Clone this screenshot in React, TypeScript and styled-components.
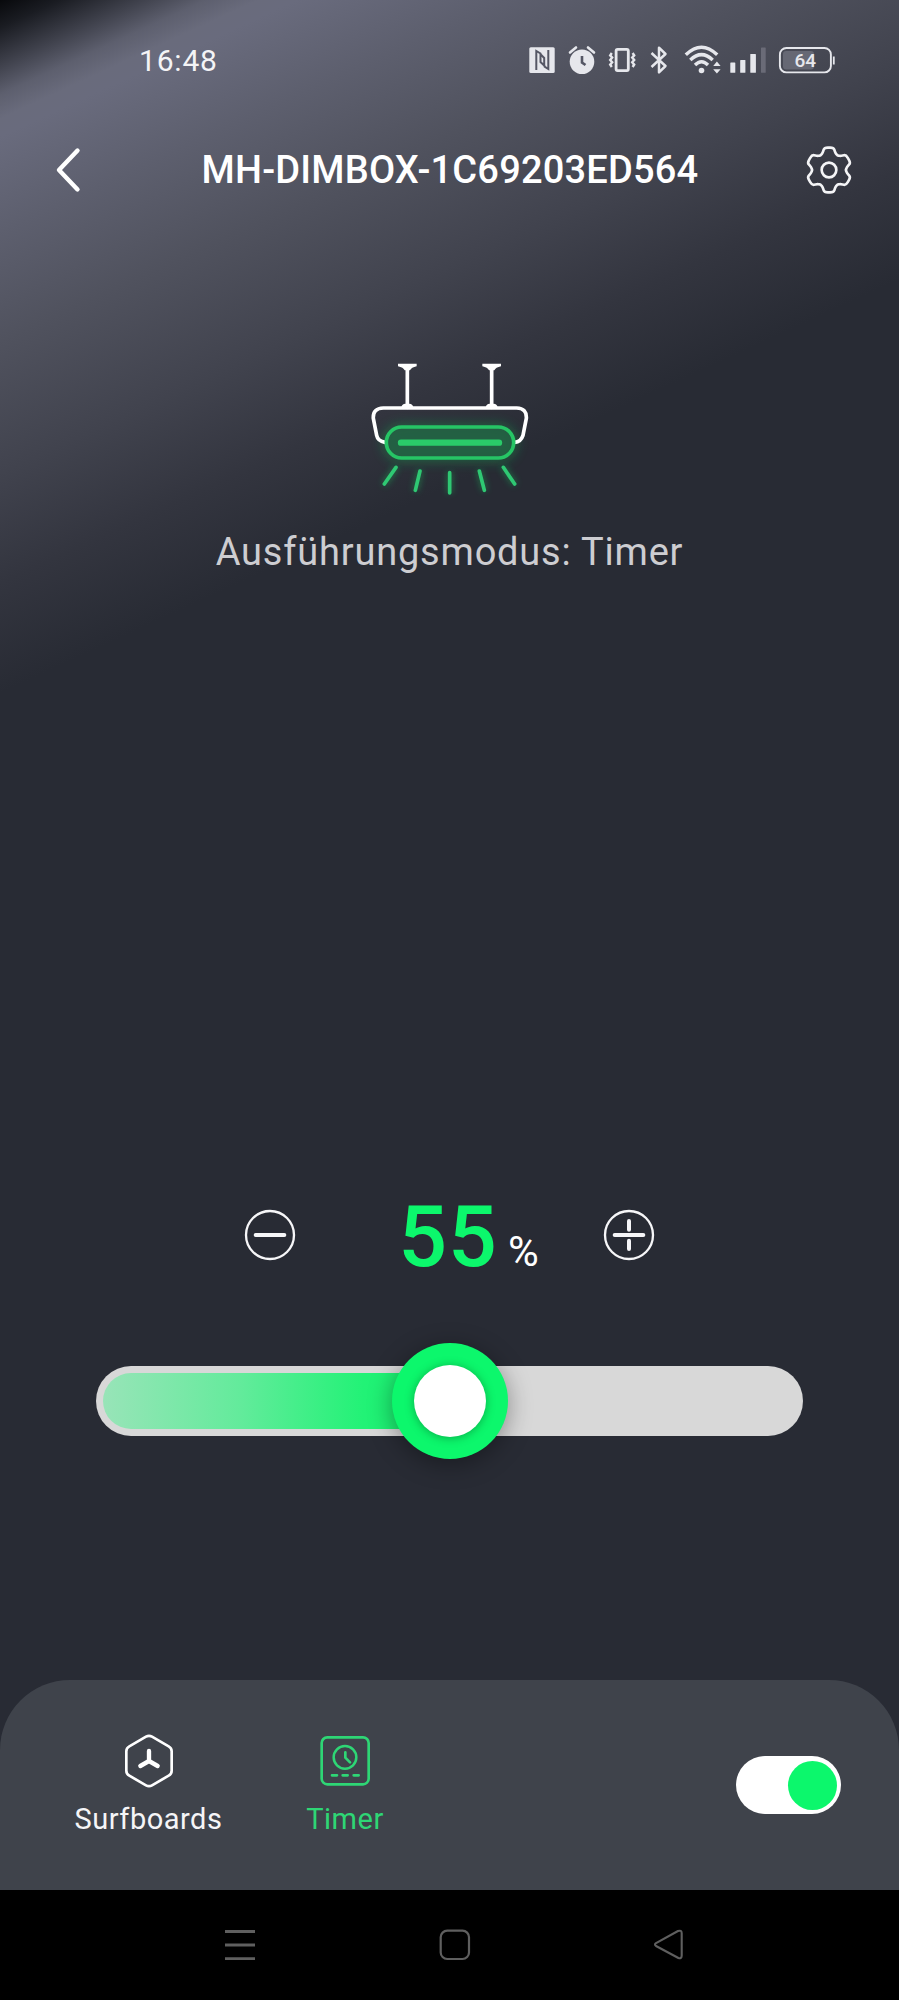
import React from "react";
import styled, { createGlobalStyle } from "styled-components";

const GREEN = "#0cf76c";
const ACTIVE = "#2ed675";
const ICON = "#e6e7ec";

const GlobalStyle = createGlobalStyle`
  *, *::before, *::after { box-sizing: border-box; }
  html, body { margin: 0; padding: 0; background: #282b34; }
  body { font-family: Roboto, "Noto Sans", sans-serif; color: #fff; }
  button { appearance: none; border: 0; padding: 0; background: none; color: inherit; font: inherit; }
  svg { display: block; flex: none; }
`;

const Screen = styled.div`
  width: 899px;
  height: 2000px;
  display: flex;
  flex-direction: column;
  overflow: hidden;
  background: linear-gradient(
    155.3deg,
    #08090c 0px,
    #1a1c22 25px,
    #40424d 60px,
    #5d5f6e 86px,
    #696b7c 108px,
    #696b7d 124px,
    #5d5f6e 210px,
    #50525e 310px,
    #41434e 430px,
    #33353f 530px,
    #282b34 630px
  );
`;

const StatusBar = styled.header`
  height: 120px;
  flex: none;
  display: flex;
  align-items: center;
  justify-content: space-between;
  padding: 0 63px 0 139px;
`;

const Clock = styled.time`
  font-size: 30px;
  line-height: 40px;
  letter-spacing: 0.8px;
  font-weight: 450;
  color: #f4f4f6;
  padding-top: 2px;
`;

const StatusIcons = styled.div`
  display: flex;
  align-items: center;
`;

const StatusSlot = styled.span<{ $gap?: number }>`
  margin-left: ${({ $gap = 12 }) => $gap}px;
`;

const TitleBar = styled.div`
  height: 100px;
  flex: none;
  display: grid;
  grid-template-columns: 96px 1fr 100px;
  align-items: center;
  padding: 0 20px;
`;

const IconButton = styled.button`
  display: flex;
  align-items: center;
  justify-content: center;
`;

const Title = styled.h1`
  margin: 0 0 0 5px;
  text-align: center;
  font-size: 38px;
  line-height: 50px;
  font-weight: 500;
  letter-spacing: 0.2px;
  white-space: nowrap;
`;

const Hero = styled.section`
  flex: none;
  height: 960px;
  padding-top: 130px;
  display: flex;
  flex-direction: column;
  align-items: center;
`;

const ModeLabel = styled.p`
  margin: 18px 0 0;
  font-size: 38px;
  line-height: 48px;
  letter-spacing: 0.8px;
  color: #cdcdd1;
`;

const Stepper = styled.section`
  flex: none;
  height: 110px;
  display: flex;
  align-items: center;
  justify-content: space-between;
  padding: 0 244px;
`;

const Reading = styled.div`
  display: flex;
  align-items: baseline;
  padding: 2px 0 0 38px;
`;

const Value = styled.span`
  font-size: 86px;
  line-height: 107px;
  font-weight: 500;
  letter-spacing: 1px;
  color: ${GREEN};
`;

const Unit = styled.span`
  font-size: 42px;
  margin-left: 10px;
`;

const SliderArea = styled.section`
  flex: none;
  height: 390px;
  padding: 76px 96px 0;
`;

const Track = styled.div`
  height: 70px;
  padding: 7px;
  display: flex;
  align-items: center;
  border-radius: 35px;
  background: #d8d8d8;
`;

const Fill = styled.div`
  width: 347px;
  height: 56px;
  border-radius: 28px 0 0 28px;
  background: linear-gradient(90deg, #98e4b8 0%, #62eb9b 40%, #22f276 75%, #14f26e 100%);
`;

const Thumb = styled.div`
  width: 116px;
  height: 116px;
  flex: none;
  margin-left: -58px;
  display: flex;
  align-items: center;
  justify-content: center;
  border-radius: 50%;
  background: ${GREEN};
  box-shadow: 0 5px 24px rgba(0, 0, 0, 0.36);
`;

const ThumbCore = styled.div`
  width: 72px;
  height: 72px;
  border-radius: 50%;
  background: #fff;
  box-shadow: 0 1px 10px rgba(0, 70, 25, 0.42);
`;

const BottomPanel = styled.footer`
  flex: none;
  height: 210px;
  display: flex;
  align-items: flex-start;
  padding: 51px 58px 0 55px;
  border-radius: 70px 70px 0 0;
  background: #3f434b;
`;

const Tab = styled.button<{ $active?: boolean }>`
  width: ${({ $active }) => ($active ? 206 : 187)}px;
  display: flex;
  flex-direction: column;
  align-items: center;
  gap: 10px;
  font-size: 29px;
  line-height: 36px;
  letter-spacing: 0.5px;
  color: ${({ $active }) => ($active ? ACTIVE : "#f5f5f7")};
`;

const Switch = styled.button`
  width: 105px;
  height: 58px;
  margin: 25px 0 0 auto;
  padding: 0 4px;
  display: flex;
  align-items: center;
  justify-content: flex-end;
  border-radius: 29px;
  background: #fff;
`;

const SwitchKnob = styled.span`
  width: 49px;
  height: 49px;
  border-radius: 50%;
  background: ${GREEN};
`;

const NavBar = styled.nav`
  flex: none;
  height: 110px;
  display: flex;
  align-items: center;
  justify-content: space-between;
  padding: 0 214px 0 224px;
  background: #000;
`;

/* Gear outline: one tooth profile repeated six times, with softened corners. */
const gearPath = (() => {
  const tooth: [number, number][] = [
    [-25, -44],
    [-19, -51],
    [-14, -67],
    [14, -67],
    [19, -51],
    [25, -44],
  ];
  const pts: [number, number][] = [];
  for (let i = 0; i < 6; i++) {
    const a = (i * Math.PI) / 3;
    for (const [x, y] of tooth) {
      pts.push([x * Math.cos(a) - y * Math.sin(a), x * Math.sin(a) + y * Math.cos(a)]);
    }
  }
  const mid = (p: number[], q: number[], t: number) => [p[0] + (q[0] - p[0]) * t, p[1] + (q[1] - p[1]) * t];
  return (
    pts
      .map((p, i) => {
        const before = mid(p, pts[(i + pts.length - 1) % pts.length], 0.38);
        const after = mid(p, pts[(i + 1) % pts.length], 0.38);
        return `${i ? "L" : "M"}${before[0].toFixed(1)} ${before[1].toFixed(1)}Q${p[0].toFixed(1)} ${p[1].toFixed(1)} ${after[0].toFixed(1)} ${after[1].toFixed(1)}`;
      })
      .join("") + "Z"
  );
})();

const NfcIcon = () => (
  <svg width="28" height="30" viewBox="0 0 28 30">
    <rect x="1.3" y="2.3" width="25.4" height="25.6" rx="1.5" fill={ICON} />
    <path d="M8.3 25V6L12.5 8.5L12.5 11M12.5 9V17L17 21.3M20.3 5V24L16.2 21.3M16.2 21.5V13L12 8.8" fill="none" stroke="#555765" strokeWidth="2" />
  </svg>
);

const AlarmIcon = () => (
  <svg width="28" height="30" viewBox="0 0 28 30">
    <circle cx="14" cy="16.8" r="12.3" fill={ICON} />
    <path d="M2 7.5L8 2.5M20 2.5L26 7.5" stroke={ICON} strokeWidth="2.6" strokeLinecap="round" />
    <path d="M14 11V17.5L17.5 20" fill="none" stroke="#555765" strokeWidth="2.6" />
  </svg>
);

const VibrateIcon = () => (
  <svg width="28" height="30" viewBox="0 0 28 30" fill="none" stroke={ICON}>
    <rect x="8.1" y="4.4" width="12.2" height="21.2" rx="1.5" strokeWidth="2.8" />
    <path d="M3.8 8L2.2 10.3L4.2 12.6L2.2 15L4.2 17.3L2.2 19.6L3.8 22M24.6 8L26.2 10.3L24.2 12.6L26.2 15L24.2 17.3L26.2 19.6L24.6 22" strokeWidth="2.4" />
  </svg>
);

const BluetoothIcon = () => (
  <svg width="20" height="30" viewBox="0 0 20 30">
    <path d="M2.5 8L16.5 21L10 27.3V2.7L16.5 9L2.5 22" fill="none" stroke={ICON} strokeWidth="2.5" strokeLinejoin="round" />
  </svg>
);

const WifiIcon = () => (
  <svg width="38" height="30" viewBox="0 0 38 30" fill="none" stroke={ICON}>
    <path d="M1.8 9.8Q17.5 -5.4 33.2 9.8" strokeWidth="3.4" />
    <path d="M6.3 15Q17.5 4.2 28.7 15" strokeWidth="3.4" />
    <path d="M11 20Q17.5 13.6 24 20" strokeWidth="3.4" />
    <circle cx="17.5" cy="25.5" r="2.8" fill={ICON} stroke="none" />
    <path d="M29.2 21L32.9 16.5L36.6 21ZM29.2 24.2L32.9 28.6L36.6 24.2Z" fill={ICON} stroke="none" />
  </svg>
);

const SignalIcon = () => (
  <svg width="38" height="30" viewBox="0 0 38 30" fill={ICON}>
    <rect x="1.3" y="17.5" width="5" height="10.3" rx="0.6" />
    <rect x="11.2" y="15" width="5.2" height="12.8" rx="0.6" />
    <rect x="21.3" y="9" width="5.6" height="18.8" rx="0.6" />
    <rect x="32" y="2.5" width="4.7" height="25.3" rx="0.6" fill="#6a6b77" />
  </svg>
);

const BatteryIcon = () => (
  <svg width="58" height="30" viewBox="0 0 58 30">
    <rect x="5" y="6" width="31" height="18.5" rx="3" fill="#666874" />
    <rect x="1.9" y="3" width="51" height="24.4" rx="6.5" fill="none" stroke={ICON} strokeWidth="1.9" />
    <path d="M55.8 11.5V19.5" stroke={ICON} strokeWidth="1.8" />
    <text x="27.3" y="22" textAnchor="middle" fontFamily="Roboto, sans-serif" fontSize="19" fontWeight="500" fill={ICON}>
      64
    </text>
  </svg>
);

const BackIcon = () => (
  <svg width="28" height="48" viewBox="0 0 28 48">
    <path d="M23.5 4.5L5 24L23.5 43.5" fill="none" stroke="#fff" strokeWidth="4.4" strokeLinecap="round" strokeLinejoin="round" />
  </svg>
);

const GearIcon = () => (
  <svg width="50" height="50" viewBox="-75 -75 150 150" fill="none" stroke="#f4f4f6" strokeWidth="8" strokeLinejoin="round">
    <path d={gearPath} />
    <circle r="22" />
  </svg>
);

const LampIcon = () => (
  <svg width="200" height="160" viewBox="0 0 600 480" fill="none" overflow="visible">
    <defs>
      <filter id="glow" x="-30%" y="-60%" width="160%" height="240%">
        <feGaussianBlur stdDeviation="17" />
      </filter>
      <filter id="raysGlow" x="-20%" y="-60%" width="140%" height="220%">
        <feGaussianBlur stdDeviation="9" />
      </filter>
    </defs>
    <rect x="98" y="222" width="404" height="114" rx="56" fill="#16994c" opacity="0.48" filter="url(#glow)" />
    <path
      d="M140 350L102 404M211 361L196 422M299 366V430M387 361L404 422M458 350L495 404"
      stroke="#16b457"
      strokeWidth="18"
      opacity="0.42"
      filter="url(#raysGlow)"
    />
    <g stroke="#fff" strokeLinecap="round" strokeLinejoin="round">
      <path d="M105 277C88 274 82 266 80 256L70 205Q68 175 100 174H500Q531 175 529 205L519 256C515 268 509 276 494 277" strokeWidth="11" />
      <path d="M172 52V172M425 52V172" strokeWidth="11" />
    </g>
    <path d="M144 41H200V49Q184 52 180 61H164Q160 52 144 49ZM397 41H453V49Q437 52 433 61H417Q413 52 397 49Z" fill="#fff" />
    <path d="M154 172Q156 161 166 161H178Q188 161 190 172ZM407 172Q409 161 419 161H431Q441 161 443 172Z" fill="#fff" />
    <rect x="109" y="231" width="382" height="93" rx="46" fill="#246044" fillOpacity="0.75" stroke="#26c565" strokeWidth="11" />
    <path d="M153 278H447" stroke="#2acb69" strokeWidth="19" strokeLinecap="round" />
    <path
      d="M138 352L103 402M210 363L196 421M299 368V429M388 363L403 421M460 352L494 402"
      stroke="#2fc873"
      strokeWidth="11"
      strokeLinecap="round"
    />
  </svg>
);

const StepIcon = ({ plus = false }: { plus?: boolean }) => (
  <svg width="52" height="52" viewBox="-78 -78 156 156" fill="none" stroke="#f6f6f8" strokeLinecap="round">
    <circle r="72" strokeWidth="7" />
    <path d="M-43 0H43" strokeWidth="12" />
    {plus && <path d="M0 -42V-16M0 17V42" strokeWidth="12" />}
  </svg>
);

const SurfboardsIcon = () => (
  <svg width="60" height="60" viewBox="-90 -90 180 180" fill="none" stroke="#fff" strokeLinejoin="round" strokeLinecap="round">
    <path d="M-9 -73Q0 -78 9 -73L59 -44Q68 -39 68 -29V29Q68 39 59 44L9 73Q0 78 -9 73L-59 44Q-68 39 -68 29V-29Q-68 -39 -59 -44Z" strokeWidth="8" />
    <path d="M0 0V-30M0 0L-26 15M0 0L26 15" strokeWidth="13" />
  </svg>
);

const TimerIcon = () => (
  <svg width="60" height="60" viewBox="-90 -90 180 180" fill="none" stroke={ACTIVE} strokeLinecap="round" strokeLinejoin="round">
    <rect x="-70" y="-71" width="141" height="141" rx="17" strokeWidth="8" />
    <circle cx="0" cy="-11" r="34" strokeWidth="7.5" />
    <path d="M1 -26V-10L15 4" strokeWidth="8" />
    <path d="M-39 43H-24M-7 43H8M26 43H41" strokeWidth="8" />
  </svg>
);

const MenuIcon = () => (
  <svg width="32" height="32" viewBox="0 0 32 32">
    <path d="M1 2.5H31M1 16H31M1 29.7H31" stroke="#5f5f5f" strokeWidth="2.8" />
  </svg>
);

const HomeIcon = () => (
  <svg width="32" height="32" viewBox="0 0 32 32">
    <rect x="1.7" y="1.7" width="28.3" height="28.3" rx="6.5" fill="none" stroke="#5f5f5f" strokeWidth="2.2" />
  </svg>
);

const ReturnIcon = () => (
  <svg width="32" height="32" viewBox="0 0 32 32">
    <path
      d="M3 14.2L25 2Q28.7 .8 28.7 4.2V26.5Q28.7 30 25.4 29L3 17Q1 15.6 3 14.2Z"
      fill="none"
      stroke="#5f5f5f"
      strokeWidth="2.1"
      strokeLinejoin="round"
    />
  </svg>
);

export default function App() {
  return (
    <>
      <GlobalStyle />
      <Screen>
        <StatusBar>
          <Clock>16:48</Clock>
          <StatusIcons>
            <StatusSlot $gap={0}><NfcIcon /></StatusSlot>
            <StatusSlot><AlarmIcon /></StatusSlot>
            <StatusSlot><VibrateIcon /></StatusSlot>
            <StatusSlot $gap={13}><BluetoothIcon /></StatusSlot>
            <StatusSlot $gap={15}><WifiIcon /></StatusSlot>
            <StatusSlot $gap={7}><SignalIcon /></StatusSlot>
            <StatusSlot $gap={11}><BatteryIcon /></StatusSlot>
          </StatusIcons>
        </StatusBar>
        <TitleBar>
          <IconButton aria-label="Zurück"><BackIcon /></IconButton>
          <Title>MH-DIMBOX-1C69203ED564</Title>
          <IconButton aria-label="Einstellungen"><GearIcon /></IconButton>
        </TitleBar>
        <Hero>
          <LampIcon />
          <ModeLabel>Ausführungsmodus: Timer</ModeLabel>
        </Hero>
        <Stepper>
          <IconButton aria-label="Weniger"><StepIcon /></IconButton>
          <Reading>
            <Value>55</Value>
            <Unit>%</Unit>
          </Reading>
          <IconButton aria-label="Mehr"><StepIcon plus /></IconButton>
        </Stepper>
        <SliderArea>
          <Track>
            <Fill />
            <Thumb>
              <ThumbCore />
            </Thumb>
          </Track>
        </SliderArea>
        <BottomPanel>
          <Tab><SurfboardsIcon />Surfboards</Tab>
          <Tab $active><TimerIcon />Timer</Tab>
          <Switch aria-label="Timer aktiv"><SwitchKnob /></Switch>
        </BottomPanel>
        <NavBar>
          <MenuIcon />
          <HomeIcon />
          <ReturnIcon />
        </NavBar>
      </Screen>
    </>
  );
}
